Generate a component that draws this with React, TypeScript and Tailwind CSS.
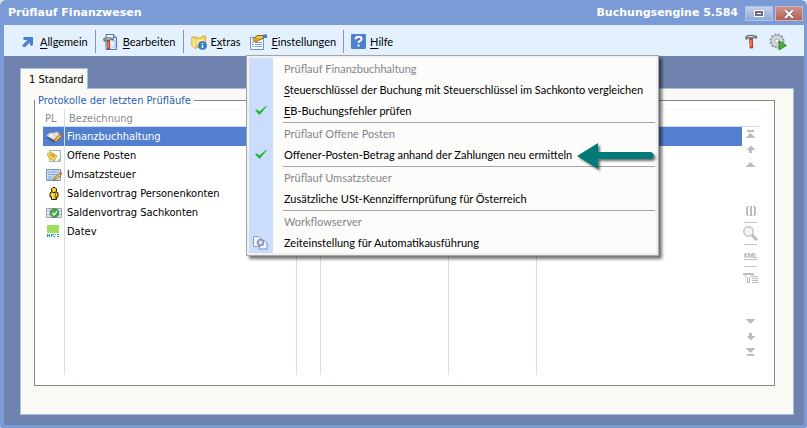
import React from "react"

interface IconProps {
  className?: string
}

const ArrowUpRightIcon: React.FC<IconProps> = ({ className }) => (
  <svg viewBox="0 0 14 14" className={className} aria-hidden="true">
    <path d="M4 2h9v8l-1.500 1-1.500-1V7.500L5 12H3.500L2 10.500 7.500 5H4L3 3.500z" fill="#4f7fd0" />
  </svg>
)

const HammerShape: React.FC = () => (
  <>
    <path d="M.5 2.500Q2 .8 4.500.8h4.500l1.500.7h2v2.500l-2-.5H8v1.500H5V3.500Q3 3.500 1.500 5.500z" fill="#8b9194" stroke="#4b4f52" strokeWidth=".8" />
    <path d="M3 2.200h6" stroke="#e8ecee" strokeWidth=".8" />
    <path d="M5 5h3l.5 9.500h-3z" fill="#ee4d22" stroke="#8c2a14" strokeWidth=".8" />
    <path d="M6.300 6v7" stroke="#ffb08a" strokeWidth=".8" />
  </>
)

const HammerIcon: React.FC<IconProps> = ({ className }) => (
  <svg viewBox="0 0 13 15" className={className} aria-hidden="true">
    <HammerShape />
  </svg>
)

const EditDocIcon: React.FC<IconProps> = ({ className }) => (
  <svg viewBox="0 0 16 16" className={className} aria-hidden="true">
    <path d="M3 .5h7.500l3 3v12H3z" fill="#e8f1ff" stroke="#4b78c4" />
    <path d="M10.500.5v3h3" fill="#a9c6f2" stroke="#4b78c4" />
    <path d="M10 7l2 3-3 4h4V5z" fill="#b9d2f5" />
    <g transform="translate(0 3) scale(.82)">
      <HammerShape />
    </g>
  </svg>
)

const FolderIcon: React.FC<IconProps> = ({ className }) => (
  <svg viewBox="0 0 16 16" className={className} aria-hidden="true">
    <path d="M1 3h5l1 1h3l1-2h3.500v11.500H4L1 12z" fill="#f5cf55" stroke="#d6a52c" strokeWidth=".8" />
    <path d="M1 3l4 2v10l-4-3z" fill="#ffe58a" stroke="#d6a52c" strokeWidth=".6" />
    <path d="M5.500 5.500h8V11h-8z" fill="#ffe99c" />
    <circle cx="11.500" cy="11.500" r="4" fill="#2c7fdc" stroke="#1b5fb5" strokeWidth=".6" />
    <path d="M11.500 9v1.200M11.500 11v3" stroke="#fff" strokeWidth="1.500" />
  </svg>
)

const SettingsIcon: React.FC<IconProps> = ({ className }) => (
  <svg viewBox="0 0 17 16" className={className} aria-hidden="true">
    <path d="M.5 3.500h13v12H.5z" fill="#f7fbff" stroke="#6f93cc" />
    <path d="M2 8.500h2M5 8.500h7M2 10.500h2M5 10.500h7M2 12.500h2M5 12.500h7" stroke="#86a5d4" />
    <path d="M3 5.500l4-4h6l1 2-4 2.500H8.500L6.500 8 4 7z" fill="#e9ae1c" stroke="#61480e" strokeWidth=".8" />
    <path d="M7 3h5" stroke="#ffe27b" />
    <path d="M13 .5h4v3.500h-3z" fill="#4877cb" />
  </svg>
)

const HelpIcon: React.FC<IconProps> = ({ className }) => (
  <svg viewBox="0 0 15 15" className={className} aria-hidden="true">
    <rect width="15" height="15" rx="1" fill="#4f7fd0" />
    <path d="M4.500 5.200Q4.500 2.700 7.500 2.700T10.500 5Q10.500 6.500 8.700 7.200 7.500 7.700 7.500 9" fill="none" stroke="#fff" strokeWidth="2" />
    <path d="M6.500 10.500h2v2h-2z" fill="#fff" />
  </svg>
)

const RunGearIcon: React.FC<IconProps> = ({ className }) => (
  <svg viewBox="0 0 18 18" className={className} aria-hidden="true">
    <circle cx="8" cy="8" r="6.500" fill="none" stroke="#8d9299" strokeWidth="2" strokeDasharray="2 1.400" />
    <circle cx="8" cy="8" r="5.700" fill="#d3d7da" stroke="#9ea3a8" strokeWidth=".7" />
    <circle cx="8" cy="8" r="2" fill="#f5f8fb" stroke="#969ba2" strokeWidth=".7" />
    <path d="M10 8l7.500 4.500L10 17z" fill="#47b13c" stroke="#23781d" strokeWidth=".8" />
  </svg>
)

const LedgerIcon: React.FC = () => (
  <svg viewBox="0 0 16 14" className="h-3.5 w-4" aria-hidden="true">
    <path d="M0 6l4-3.500L7.500 3l3-1.500L14 4 8 10z" fill="#dedede" stroke="#8f8f8f" strokeWidth=".7" />
    <path d="M1 7l7 5 2-2" fill="none" stroke="#39486b" strokeWidth="1.200" />
    <path d="M7.500 3L5 6.500M3.500 4.500l4 3" stroke="#fff" strokeWidth=".8" />
    <path d="M8 12l1-3 5-5 2 2-5 5z" fill="#f3bb35" stroke="#7c4b17" strokeWidth=".6" />
    <path d="M13.500 4.500L15 3l1 1-1 2z" fill="#d8442d" />
  </svg>
)

const OpenItemsIcon: React.FC = () => (
  <svg viewBox="0 0 14 14" className="h-3.5 w-3.5" aria-hidden="true">
    <path d="M2.500 1.500h11v11h-11z" fill="#fafafa" stroke="#b0b0b0" />
    <path d="M9 13l4-4v4z" fill="#bbb" />
    <path d="M0 5l4-2 6 4-3 5-5-3z" fill="#f4cf56" stroke="#c9a437" strokeWidth=".8" />
    <path d="M3 5.500l4 2.500M5 5l3 2" stroke="#987216" strokeWidth=".7" />
  </svg>
)

const TaxFormIcon: React.FC = () => (
  <svg viewBox="0 0 16 14" className="h-3.5 w-4" aria-hidden="true">
    <path d="M.5 1.500h14v11H.5z" fill="#cfe3f7" stroke="#7d90aa" />
    <path d="M2 4h5M9 4h4M2 6.500h5M9 6.500h4M2 9h4M8 2v10M2 11h7" stroke="#7fa6d1" />
    <path d="M8 12l1-3 5-4 1.500 2-5 4z" fill="#f3bb35" stroke="#84551c" strokeWidth=".6" />
    <path d="M13.500 5l1-1.500L16 5l-1 1.500z" fill="#cf432f" />
  </svg>
)

const PersonIcon: React.FC = () => (
  <svg viewBox="0 0 10 13" className="h-[13px] w-2.5" aria-hidden="true">
    <path d="M2 5h6l1 1v4H7.500v2.500h-5V10H1V6z" fill="#efc21e" stroke="#2b2206" />
    <path d="M4 .5h2L7.500 2v2L6 5.500H4L2.500 4V2z" fill="#f6d235" stroke="#2b2206" />
    <path d="M3.500 6v6" stroke="#fff09a" />
    <path d="M6.500 6v6" stroke="#a37908" />
  </svg>
)

const AccountIcon: React.FC = () => (
  <svg viewBox="0 0 16 12" className="h-3 w-4" aria-hidden="true">
    <path d="M.5 1.500h15v9H.5z" fill="#eef2f8" stroke="#95a3bb" />
    <path d="M1 4h14M1 7.500h14M4 2v8M12 2v8" stroke="#a9b6ca" />
    <circle cx="8.500" cy="6" r="4.300" fill="#46a849" stroke="#2c7c34" strokeWidth=".8" />
    <path d="M6.300 6l1.700 2 3-3.500" fill="none" stroke="#fff" strokeWidth="1.200" />
  </svg>
)

const DatevIcon: React.FC = () => (
  <svg viewBox="0 0 13 13" className="h-[13px] w-[13px]" shapeRendering="crispEdges" aria-hidden="true">
    <path d="M0 0h12v8H0z" fill="#a1dd60" />
    <path d="M0 9h1v3H0zM1 10h1v1H1zM2 9h1v3H2zM4 9h3v1H4zM4 10h1v2H4zM6 11h2v1H6zM8 9h1v1H8zM10 9h2v1h-2zM10 11h2v1h-2z" fill="#19aa9a" />
  </svg>
)

const CheckIcon: React.FC = () => (
  <svg viewBox="0 0 12 9" className="h-[9px] w-3" aria-hidden="true">
    <path d="M0 4l2-.5 2.500 2L11 0h1L5 8.500H4z" fill="#1fb825" />
  </svg>
)

const CopyGearIcon: React.FC = () => (
  <svg viewBox="0 0 15 15" className="h-[15px] w-[15px]" aria-hidden="true">
    <path d="M.5 1.500h5L8.500 4v7.500h-8z" fill="#f2f6ff" stroke="#8b9cc6" />
    <path d="M6.500 5.500h5L14 8v6H6.500z" fill="#f2f6ff" stroke="#7b8fbd" />
    <circle cx="7.500" cy="7.500" r="3" fill="#c4cbe5" stroke="#8a8fb5" strokeWidth="1.500" />
    <circle cx="7.500" cy="7.500" r="1" fill="#fff" />
  </svg>
)

interface ToolbarButtonProps {
  icon: React.ReactNode
  before?: string
  hotkey: string
  after: string
}

const ToolbarButton: React.FC<ToolbarButtonProps> = ({ icon, before, hotkey, after }) => (
  <button type="button" className="flex items-center gap-1 whitespace-nowrap">
    {icon}
    <span>
      {before}
      <u className="underline-offset-2">{hotkey}</u>
      {after}
    </span>
  </button>
)

const Separator: React.FC = () => <div className="mx-[7px] h-[23px] w-px bg-[#8e959d]" />

interface MenuEntryProps {
  icon?: React.ReactNode
  checked?: boolean
  children: React.ReactNode
}

const MenuEntry: React.FC<MenuEntryProps> = ({ icon, checked, children }) => (
  <button
    type="button"
    role={checked === undefined ? "menuitem" : "menuitemcheckbox"}
    aria-checked={checked}
    className="flex h-[21px] w-full items-center text-left whitespace-nowrap"
  >
    <span className="flex w-[23px] shrink-0 justify-center">{checked ? <CheckIcon /> : icon}</span>
    <span className="pl-3">{children}</span>
  </button>
)

const MenuHeading: React.FC<{ children: React.ReactNode }> = ({ children }) => (
  <div className="flex h-[21px] items-center pl-[35px] text-[#85858a]">{children}</div>
)

const MenuDivider: React.FC = () => <div className="mr-px ml-[34px] h-0.5 border-b border-[#a5a5a5]" />

const SettingsMenu: React.FC = () => (
  <div
    role="menu"
    className="absolute top-[30px] left-[242px] z-10 w-[413px] border border-[#a5a5a5] bg-[#f0f0f0] p-0.5 font-[Lato,'Liberation_Sans',sans-serif] text-[11px] text-black shadow-[3px_3px_3px_rgba(0,0,0,0.55)]"
  >
    <div className="bg-[linear-gradient(to_right,#cbdcfd_24px,#fcfcfa_24px)]">
      <MenuHeading>Prüflauf Finanzbuchhaltung</MenuHeading>
      <MenuEntry checked={false}>
        <u className="underline-offset-2">S</u>teuerschlüssel der Buchung mit Steuerschlüssel im Sachkonto vergleichen
      </MenuEntry>
      <MenuEntry checked>
        <u className="underline-offset-2">E</u>B-Buchungsfehler prüfen
      </MenuEntry>
      <MenuDivider />
      <MenuHeading>Prüflauf Offene Posten</MenuHeading>
      <div className="relative">
        <MenuEntry checked>Offener-Posten-Betrag anhand der Zahlungen neu ermitteln</MenuEntry>
        <svg
          viewBox="0 0 80 30"
          className="absolute top-[-2px] right-0 z-10 h-[30px] w-20 drop-shadow-[2px_2px_1px_rgba(0,0,0,0.55)]"
          aria-hidden="true"
        >
          <path d="M1 14L22 1v9h52a3.500 3.500 0 0 1 0 7H22v10z" fill="#007a78" />
        </svg>
      </div>
      <MenuDivider />
      <MenuHeading>Prüflauf Umsatzsteuer</MenuHeading>
      <MenuEntry checked={false}>Zusätzliche USt-Kennziffernprüfung für Österreich</MenuEntry>
      <MenuDivider />
      <MenuHeading>Workflowserver</MenuHeading>
      <MenuEntry icon={<CopyGearIcon />}>Zeiteinstellung für Automatikausführung</MenuEntry>
    </div>
  </div>
)

const entries = [
  { name: "Finanzbuchhaltung", icon: <LedgerIcon /> },
  { name: "Offene Posten", icon: <OpenItemsIcon /> },
  { name: "Umsatzsteuer", icon: <TaxFormIcon /> },
  { name: "Saldenvortrag Personenkonten", icon: <PersonIcon /> },
  { name: "Saldenvortrag Sachkonten", icon: <AccountIcon /> },
  { name: "Datev", icon: <DatevIcon /> },
]

const ProtocolTable: React.FC = () => (
  <table className="min-w-0 flex-1 table-fixed border-separate border-spacing-0 text-left">
    <colgroup>
      <col className="w-[22px]" />
      <col className="w-[232px]" />
      <col className="w-6" />
      <col className="w-32" />
      <col className="w-[88px]" />
      <col />
    </colgroup>
    <thead>
      <tr className="h-[18px] text-[#8a8a8a]">
        <th className="border-t border-r border-b border-t-[#f8f7f2] border-r-[#c9dffa] border-b-[#c9dffa] p-0 pl-0.5 font-normal">PL</th>
        <th className="border-t border-r border-b border-t-[#f8f7f2] border-r-[#c9dffa] border-b-[#c9dffa] p-0 pl-1 font-normal">Bezeichnung</th>
        <th className="border-t border-r border-b border-t-[#f8f7f2] border-r-[#c9dffa] border-b-[#c9dffa] p-0" />
        <th className="border-t border-r border-b border-t-[#f8f7f2] border-r-[#c9dffa] border-b-[#c9dffa] p-0" />
        <th className="border-t border-r border-b border-t-[#f8f7f2] border-r-[#c9dffa] border-b-[#c9dffa] p-0" />
        <th className="border-t border-b border-t-[#f8f7f2] border-b-[#c9dffa] p-0" />
      </tr>
    </thead>
    <tbody>
      {entries.map((entry, index) => (
        <tr key={entry.name} className={index === 0 ? "h-[19px] bg-[#527fce] text-white" : "h-[19px]"}>
          <td className="border-r border-[#c9dffa] p-0">
            <div className="flex justify-center">{entry.icon}</div>
          </td>
          <td className="border-r border-[#c9dffa] p-0 pl-0.5 whitespace-nowrap">{entry.name}</td>
          <td className="border-r border-[#c9dffa] p-0" />
          <td className="border-r border-[#c9dffa] p-0" />
          <td className="border-r border-[#c9dffa] p-0" />
          <td className="p-0" />
        </tr>
      ))}
      <tr className="h-[134px]" aria-hidden="true">
        <td className="border-r border-[#c9dffa] p-0" />
        <td className="border-r border-[#c9dffa] p-0" />
        <td className="border-r border-[#c9dffa] p-0" />
        <td className="border-r border-[#c9dffa] p-0" />
        <td className="border-r border-[#c9dffa] p-0" />
        <td className="p-0" />
      </tr>
    </tbody>
  </table>
)

interface SideButtonProps {
  label: string
  path: string
}

const SideButton: React.FC<SideButtonProps> = ({ label, path }) => (
  <button type="button" aria-label={label} className="flex h-[15px] w-4 items-center justify-center">
    <svg viewBox="0 0 9 9" className="h-[9px] w-[9px]" shapeRendering="crispEdges" aria-hidden="true">
      <path d={path} fill="#bdbdbd" />
    </svg>
  </button>
)

const SideBar: React.FC = () => (
  <div className="flex w-[17px] shrink-0 flex-col items-center">
    <div className="h-[18px] w-full border-t border-b border-t-[#f8f7f2] border-b-[#c9dffa]" />
    <SideButton label="Zum Anfang" path="M1 0h7v2H1zM4 3h1l4 5H0z" />
    <SideButton label="Seite zurück" path="M4 1h1l4 4H6v3H3V5H0z" />
    <SideButton label="Zurück" path="M4 2h1l4 5H0z" />
    <button type="button" aria-label="Spaltenbreite" className="mt-[30px] flex h-[18px] w-4 items-center justify-center">
      <svg viewBox="0 0 10 10" className="h-2.5 w-2.5" shapeRendering="crispEdges" aria-hidden="true">
        <path d="M0 1h1V0h2v1H2v8h1v1H1V9H0zM4 0h2v10H4zM7 0h2v1h1v8H9v1H7V9h1V1H7z" fill="#bdbdbd" />
      </svg>
    </button>
    <div className="mt-0.5 h-px w-[13px] bg-[#c4c4c4]" />
    <button type="button" aria-label="Suchen" className="flex h-[21px] w-4 items-center justify-center">
      <svg viewBox="0 0 15 15" className="h-[15px] w-[15px]" aria-hidden="true">
        <circle cx="5.500" cy="5.500" r="4.700" fill="#f4f4ff" stroke="#c0c0c0" strokeWidth="1.400" />
        <path d="M9 9l5 5" stroke="#bdbdbd" strokeWidth="3" />
      </svg>
    </button>
    <div className="h-px w-[13px] bg-[#c4c4c4]" />
    <button type="button" aria-label="XML-Export" className="flex h-[21px] w-4 items-center justify-center">
      <svg viewBox="0 0 13 9" className="h-[9px] w-[13px]" aria-hidden="true">
        <text x="6.500" y="7" textAnchor="middle" fill="#b0b0b0" fontSize="7" fontWeight="bold" fontFamily="Liberation Sans, sans-serif">
          XML
        </text>
        <path d="M0 8.500h13" stroke="#bdbdbd" />
      </svg>
    </button>
    <div className="h-px w-[13px] bg-[#c4c4c4]" />
    <button type="button" aria-label="Filter" className="flex h-[21px] w-4 items-center justify-center">
      <svg viewBox="0 0 15 10" className="h-2.5 w-[15px] shrink-0" aria-hidden="true">
        <path d="M0 0h11v2H0z" fill="#bdbdbd" />
        <path d="M1 1.500l3.500 3.500v4.500h2V5L10 1.500" fill="none" stroke="#b5b5b5" />
        <path d="M9 3.500h6M9 5.500h6M9 7.500h6M9 9.500h6" stroke="#bdbdbd" />
      </svg>
    </button>
    <div className="mt-auto flex flex-col pb-4">
      <SideButton label="Weiter" path="M0 2h9L5 7H4z" />
      <SideButton label="Seite vor" path="M3 1h3v3h3L5 8H4L0 4h3z" />
      <SideButton label="Zum Ende" path="M0 1h9L5 6H4zM1 7h7v2H1z" />
    </div>
  </div>
)

const App: React.FC = () => {
  return (
    <div className="min-h-screen bg-[#dce9e5] font-['DejaVu_Sans_Condensed','DejaVu_Sans',Tahoma,sans-serif] text-[11px] leading-[13px] text-black">
      <div className="flex min-h-screen flex-col rounded-t-md rounded-b-xs bg-[#7b9bd7] pr-[3px] pb-[3px] pl-1">
        <header className="flex h-[25px] items-center pl-1 font-['DejaVu_Sans',Verdana,sans-serif] font-bold text-white">
          <h1>Prüflauf Finanzwesen</h1>
          <span className="ml-auto">Buchungsengine 5.584</span>
          <button
            type="button"
            aria-label="Maximieren"
            className="mt-0.5 ml-[7px] flex h-[15px] w-7 items-center justify-center border border-[#aec2e5] bg-linear-to-b from-[#c3cfe6] to-[#8fa9da]"
          >
            <span className="flex h-[7px] w-2.5 items-center justify-center border border-white bg-[#6a6f83]">
              <span className="h-px w-1 bg-white" />
            </span>
          </button>
          <button
            type="button"
            aria-label="Schließen"
            className="mt-0.5 mr-px ml-0.5 flex h-[15px] w-7 items-center justify-center border border-[#d5b1bd] bg-linear-to-b from-[#cc938f] to-[#b8604f]"
          >
            <svg viewBox="0 0 10 8" className="h-2 w-2.5" aria-hidden="true">
              <path d="M1 0l8 8M9 0L1 8" stroke="#6f5665" strokeWidth="3.500" />
              <path d="M1 0l8 8M9 0L1 8" stroke="#fff" strokeWidth="2.200" />
            </svg>
          </button>
        </header>

        <div className="relative flex flex-1 flex-col bg-[#7083ae]">
          <nav className="flex h-[31px] shrink-0 items-center bg-[#e3f1ff] pt-0.5 pr-[17px] pl-4 font-[Lato,'Liberation_Sans',sans-serif]">
            <ToolbarButton icon={<ArrowUpRightIcon className="mr-0.5 h-3.5 w-3.5" />} hotkey="A" after="llgemein" />
            <Separator />
            <ToolbarButton icon={<EditDocIcon className="h-4 w-4" />} hotkey="B" after="earbeiten" />
            <Separator />
            <ToolbarButton icon={<FolderIcon className="h-4 w-4" />} before="E" hotkey="x" after="tras" />
            <div className="w-2.5" />
            <ToolbarButton icon={<SettingsIcon className="h-4 w-[17px]" />} hotkey="E" after="instellungen" />
            <Separator />
            <ToolbarButton icon={<HelpIcon className="h-[15px] w-[15px]" />} hotkey="H" after="ilfe" />
            <button type="button" aria-label="Prüflauf bearbeiten" className="ml-auto">
              <HammerIcon className="h-[15px] w-3" />
            </button>
            <button type="button" aria-label="Prüflauf starten" className="ml-3">
              <RunGearIcon className="h-[18px] w-[18px]" />
            </button>
          </nav>
          <SettingsMenu />

          <main className="flex flex-1 flex-col pt-3 pr-2.5 pb-2.5 pl-4">
            <div role="tablist" className="z-[1] flex">
              <button
                type="button"
                role="tab"
                aria-selected="true"
                className="-mb-px h-[21px] border border-b-0 border-[#a3c0dc] bg-[#faf9f5] pr-1 pl-2"
              >
                1 Standard
              </button>
            </div>
            <section className="flex flex-1 flex-col border border-[#a3c0dc] bg-[#faf9f5] pt-[5px] pr-[18px] pb-7 pl-[13px]">
              <fieldset className="min-w-0 flex-1 border border-[#858585] bg-white pb-[9px] pl-2">
                <legend className="-ml-2 px-[3px] text-[#2a61b4]">Protokolle der letzten Prüfläufe</legend>
                <div className="flex pt-0.5 pr-[15px]">
                  <ProtocolTable />
                  <SideBar />
                </div>
              </fieldset>
            </section>
          </main>
        </div>
      </div>
    </div>
  )
}

export default App
